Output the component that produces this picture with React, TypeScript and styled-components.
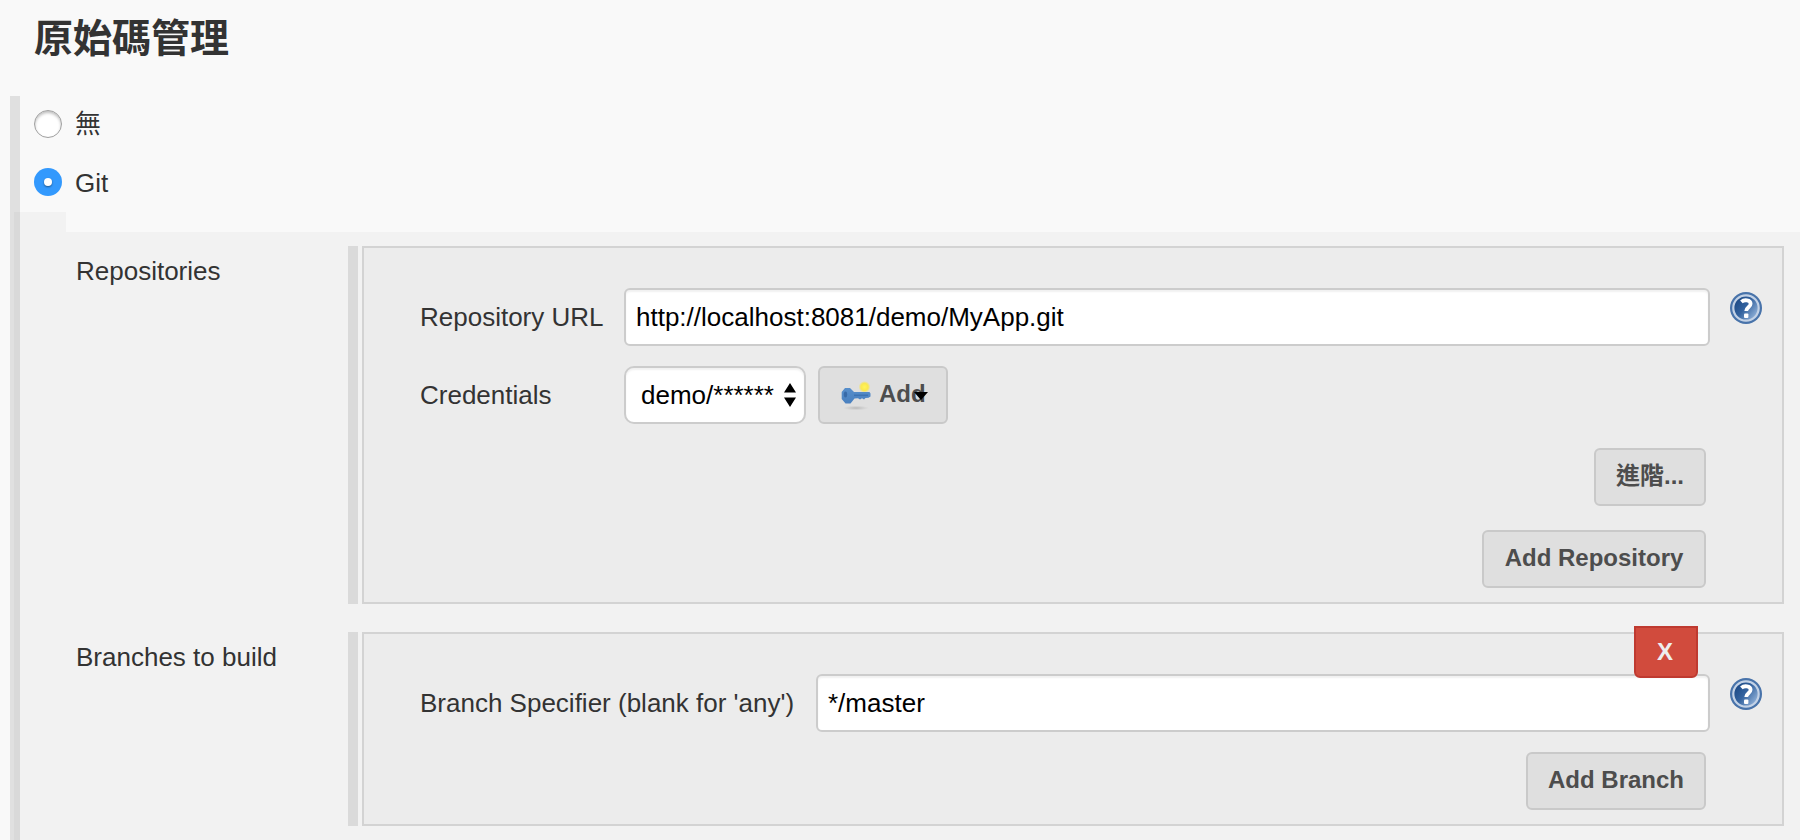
import React from "react";
import styled, { createGlobalStyle } from "styled-components";

const GlobalStyle = createGlobalStyle`
  *, *::before, *::after { box-sizing: border-box; }
  body {
    margin: 0;
    background: #f9f9f9;
    color: #333;
    font: 26px/30px "Liberation Sans", "Noto Sans CJK TC", sans-serif;
  }
`;

const Page = styled.main`
  width: 1800px;
  height: 840px;
  overflow: hidden;
  background: #f9f9f9;
`;

const Title = styled.h1`
  margin: 0;
  height: 96px;
  padding: 6px 0 0 34px;
  font: bold 39px/58px "Noto Sans CJK TC", sans-serif;
`;

const ScmSection = styled.section`
  height: 744px;
  margin-left: 10px;
  border-left: 10px solid #e0e0e0;
`;

const Options = styled.div`
  height: 116px;
  padding: 3px 0 0 14px;
`;

const Option = styled.label`
  display: flex;
  align-items: center;
  gap: 13px;
  height: 58px;
  padding-bottom: 8px;
`;

const Radio = styled.span<{ $checked?: boolean }>`
  display: flex;
  align-items: center;
  justify-content: center;
  width: 28px;
  height: 28px;
  border-radius: 50%;
  background: ${(p) => (p.$checked ? "#3399fd" : "#fff")};
  border: ${(p) => (p.$checked ? "none" : "1px solid #a0a0a0")};
  box-shadow: ${(p) => (p.$checked ? "none" : "inset 0 2px 3px rgba(0, 0, 0, 0.25)")};
`;

const Dot = styled.span`
  width: 8px;
  height: 8px;
  border-radius: 50%;
  background: #fff;
  box-shadow: 0 1px 2px rgba(0, 0, 0, 0.45);
`;

const OptionText = styled.span<{ $shift?: number }>`
  padding-top: ${(p) => p.$shift ?? 0}px;
`;

const GitPanel = styled.div`
  height: 628px;
  margin-left: -6px;
  border-left: 6px solid #d9d9d9;
  background: #f2f2f2;
`;

const PanelCutout = styled.div`
  height: 20px;
  margin-left: 46px;
  background: #f9f9f9;
`;

const Groups = styled.div`
  display: flex;
  flex-direction: column;
  gap: 28px;
  padding: 14px 16px 0 56px;
`;

const Group = styled.div<{ $height: number }>`
  display: grid;
  grid-template-columns: 272px 10px 1fr;
  height: ${(p) => p.$height}px;
`;

const GroupLabel = styled.div`
  padding-top: 10px;
`;

const DragHandle = styled.div`
  background: #dadada;
`;

const Box = styled.div`
  margin-left: 4px;
  padding: 40px 76px 0 56px;
  border: 2px solid #d3d3d3;
  background: #ececec;
`;

const Field = styled.div<{ $labelWidth: number }>`
  display: grid;
  grid-template-columns: ${(p) => p.$labelWidth}px 1fr;
  align-items: center;
  height: 58px;
  margin-right: -4px;
  margin-bottom: 20px;
`;

const InputWithHelp = styled.div`
  display: flex;
  margin-right: -52px;
`;

const TextInput = styled.div`
  flex: 1;
  height: 58px;
  padding: 12px 10px;
  border: 2px solid #ccc;
  border-radius: 6px;
  background: #fff;
  box-shadow: inset 0 2px 2px rgba(0, 0, 0, 0.06);
  color: #000;
`;

const HelpButton = styled.span`
  width: 32px;
  height: 32px;
  margin: 4px 0 0 20px;
  svg { display: block; }
`;

const Controls = styled.div`
  display: flex;
  gap: 12px;
`;

const Select = styled.div`
  display: flex;
  justify-content: space-between;
  width: 182px;
  height: 58px;
  padding: 12px 8px 0 15px;
  border: 2px solid #ccc;
  border-radius: 10px;
  background: #fff;
  box-shadow: inset 0 2px 2px rgba(0, 0, 0, 0.06);
  color: #000;
  svg { margin-top: 3px; }
`;

const Button = styled.button<{ $width: number }>`
  display: flex;
  justify-content: center;
  width: ${(p) => p.$width}px;
  height: 58px;
  padding: 11px 0 0;
  border: 2px solid #c9c9c9;
  border-radius: 6px;
  background: #dfdfdf;
  color: #4d4d4d;
  font: bold 24px/30px "Liberation Sans", "Noto Sans CJK TC", sans-serif;
  white-space: nowrap;
`;

const AddButton = styled(Button)`
  position: relative;
  justify-content: flex-start;
  padding-left: 20px;
`;

const KeyPicture = styled.span`
  width: 32px;
  height: 32px;
  margin: 1px 7px 0 0;
`;

const Caret = styled.span`
  position: absolute;
  left: 94px;
  top: 24px;
  border: 7px solid transparent;
  border-top: 8px solid #000;
  border-bottom: 0;
`;

const Actions = styled.div<{ $gap?: number }>`
  display: flex;
  flex-direction: column;
  align-items: flex-end;
  gap: 24px;
  padding-top: ${(p) => p.$gap ?? 0}px;
`;

const BranchBox = styled(Box)`
  position: relative;
`;

const DeleteButton = styled.button`
  position: absolute;
  right: 84px;
  top: -8px;
  width: 64px;
  height: 52px;
  padding: 0 2px 0 0;
  border: 2px solid #bf3a30;
  border-radius: 0 0 6px 6px;
  background: #d14b3d;
  color: #eee;
  font: bold 24px/30px "Liberation Sans", sans-serif;
`;

const HelpIcon = ({ id }: { id: string }) => (
  <HelpButton>
    <svg width="32" height="32" viewBox="0 0 32 32">
      <defs>
        <linearGradient id={id} x1="0.1" y1="0.2" x2="0.9" y2="0.8">
          <stop offset="0" stopColor="#1d4a86" />
          <stop offset="0.45" stopColor="#34639f" />
          <stop offset="1" stopColor="#8eafd7" />
        </linearGradient>
      </defs>
      <circle cx="16" cy="16" r="16" fill="#4873aa" />
      <circle cx="16" cy="16" r="12.700" fill={`url(#${id})`} stroke="#c3d2e6" strokeWidth="2.200" />
      <path
        d="M11.400 9.800c2.600-2.400 9.200-2.200 9.200 1.900 0 3.600-4.400 3.600-4.400 7.400"
        fill="none"
        stroke="#fff"
        strokeWidth="3.800"
      />
      <rect x="14" y="21.600" width="4.400" height="4.400" rx="1" fill="#fff" />
    </svg>
  </HelpButton>
);

const KeyIcon = () => (
  <KeyPicture>
    <svg width="32" height="32" viewBox="0 0 32 32">
      <defs>
        <radialGradient id="spark">
          <stop offset="0" stopColor="#fff45c" />
          <stop offset="0.6" stopColor="#fbe84e" />
          <stop offset="1" stopColor="#f7e659" stopOpacity="0" />
        </radialGradient>
        <radialGradient id="shade">
          <stop offset="0" stopColor="#aaa" stopOpacity="0.75" />
          <stop offset="1" stopColor="#bbb" stopOpacity="0" />
        </radialGradient>
        <linearGradient id="metal" x1="0" y1="0" x2="0" y2="1">
          <stop offset="0" stopColor="#568ecb" />
          <stop offset="1" stopColor="#4a80bf" />
        </linearGradient>
        <filter id="soft">
          <feGaussianBlur stdDeviation="0.6" />
        </filter>
      </defs>
      <ellipse cx="16" cy="28" rx="13" ry="2.400" fill="url(#shade)" />
      <circle cx="24.500" cy="7" r="6" fill="url(#spark)" />
      <g filter="url(#soft)">
        <path
          d="M5 8h5l4 4h15.500l1 1.500v3l-2 1.300-3 .2-1.500 1.500-2-1.200-2 1.200-2-1.200-3.500.2-4 5h-5L1.700 19v-7z"
          fill="url(#metal)"
        />
        <ellipse cx="5.500" cy="14.500" rx="1.700" ry="3" fill="#376ba8" />
        <path d="M14 15.300h14" stroke="#3e73b2" strokeWidth="1.500" />
      </g>
    </svg>
  </KeyPicture>
);

const SelectArrows = () => (
  <svg width="12" height="24" viewBox="0 0 12 24">
    <path d="M6 0l6 9.500H0zM6 24l6-9.500H0z" fill="#000" />
  </svg>
);

export default function App() {
  return (
    <Page>
      <GlobalStyle />
      <Title>原始碼管理</Title>
      <ScmSection>
        <Options>
          <Option>
            <Radio />
            <OptionText>無</OptionText>
          </Option>
          <Option>
            <Radio $checked>
              <Dot />
            </Radio>
            <OptionText $shift={2}>Git</OptionText>
          </Option>
        </Options>
        <GitPanel>
          <PanelCutout />
          <Groups>
            <Group $height={358}>
              <GroupLabel>Repositories</GroupLabel>
              <DragHandle />
              <Box>
                <Field $labelWidth={204}>
                  <span>Repository URL</span>
                  <InputWithHelp>
                    <TextInput>http://localhost:8081/demo/MyApp.git</TextInput>
                    <HelpIcon id="help-url" />
                  </InputWithHelp>
                </Field>
                <Field $labelWidth={204}>
                  <span>Credentials</span>
                  <Controls>
                    <Select>
                      <span>demo/******</span>
                      <SelectArrows />
                    </Select>
                    <AddButton $width={130}>
                      <KeyIcon />
                      Add
                      <Caret />
                    </AddButton>
                  </Controls>
                </Field>
                <Actions $gap={4}>
                  <Button $width={112}>進階...</Button>
                  <Button $width={224}>Add Repository</Button>
                </Actions>
              </Box>
            </Group>
            <Group $height={194}>
              <GroupLabel>Branches to build</GroupLabel>
              <DragHandle />
              <BranchBox>
                <Field $labelWidth={396}>
                  <span>Branch Specifier (blank for 'any')</span>
                  <InputWithHelp>
                    <TextInput>*/master</TextInput>
                    <HelpIcon id="help-branch" />
                  </InputWithHelp>
                </Field>
                <Actions>
                  <Button $width={180}>Add Branch</Button>
                </Actions>
                <DeleteButton>X</DeleteButton>
              </BranchBox>
            </Group>
          </Groups>
        </GitPanel>
      </ScmSection>
    </Page>
  );
}
